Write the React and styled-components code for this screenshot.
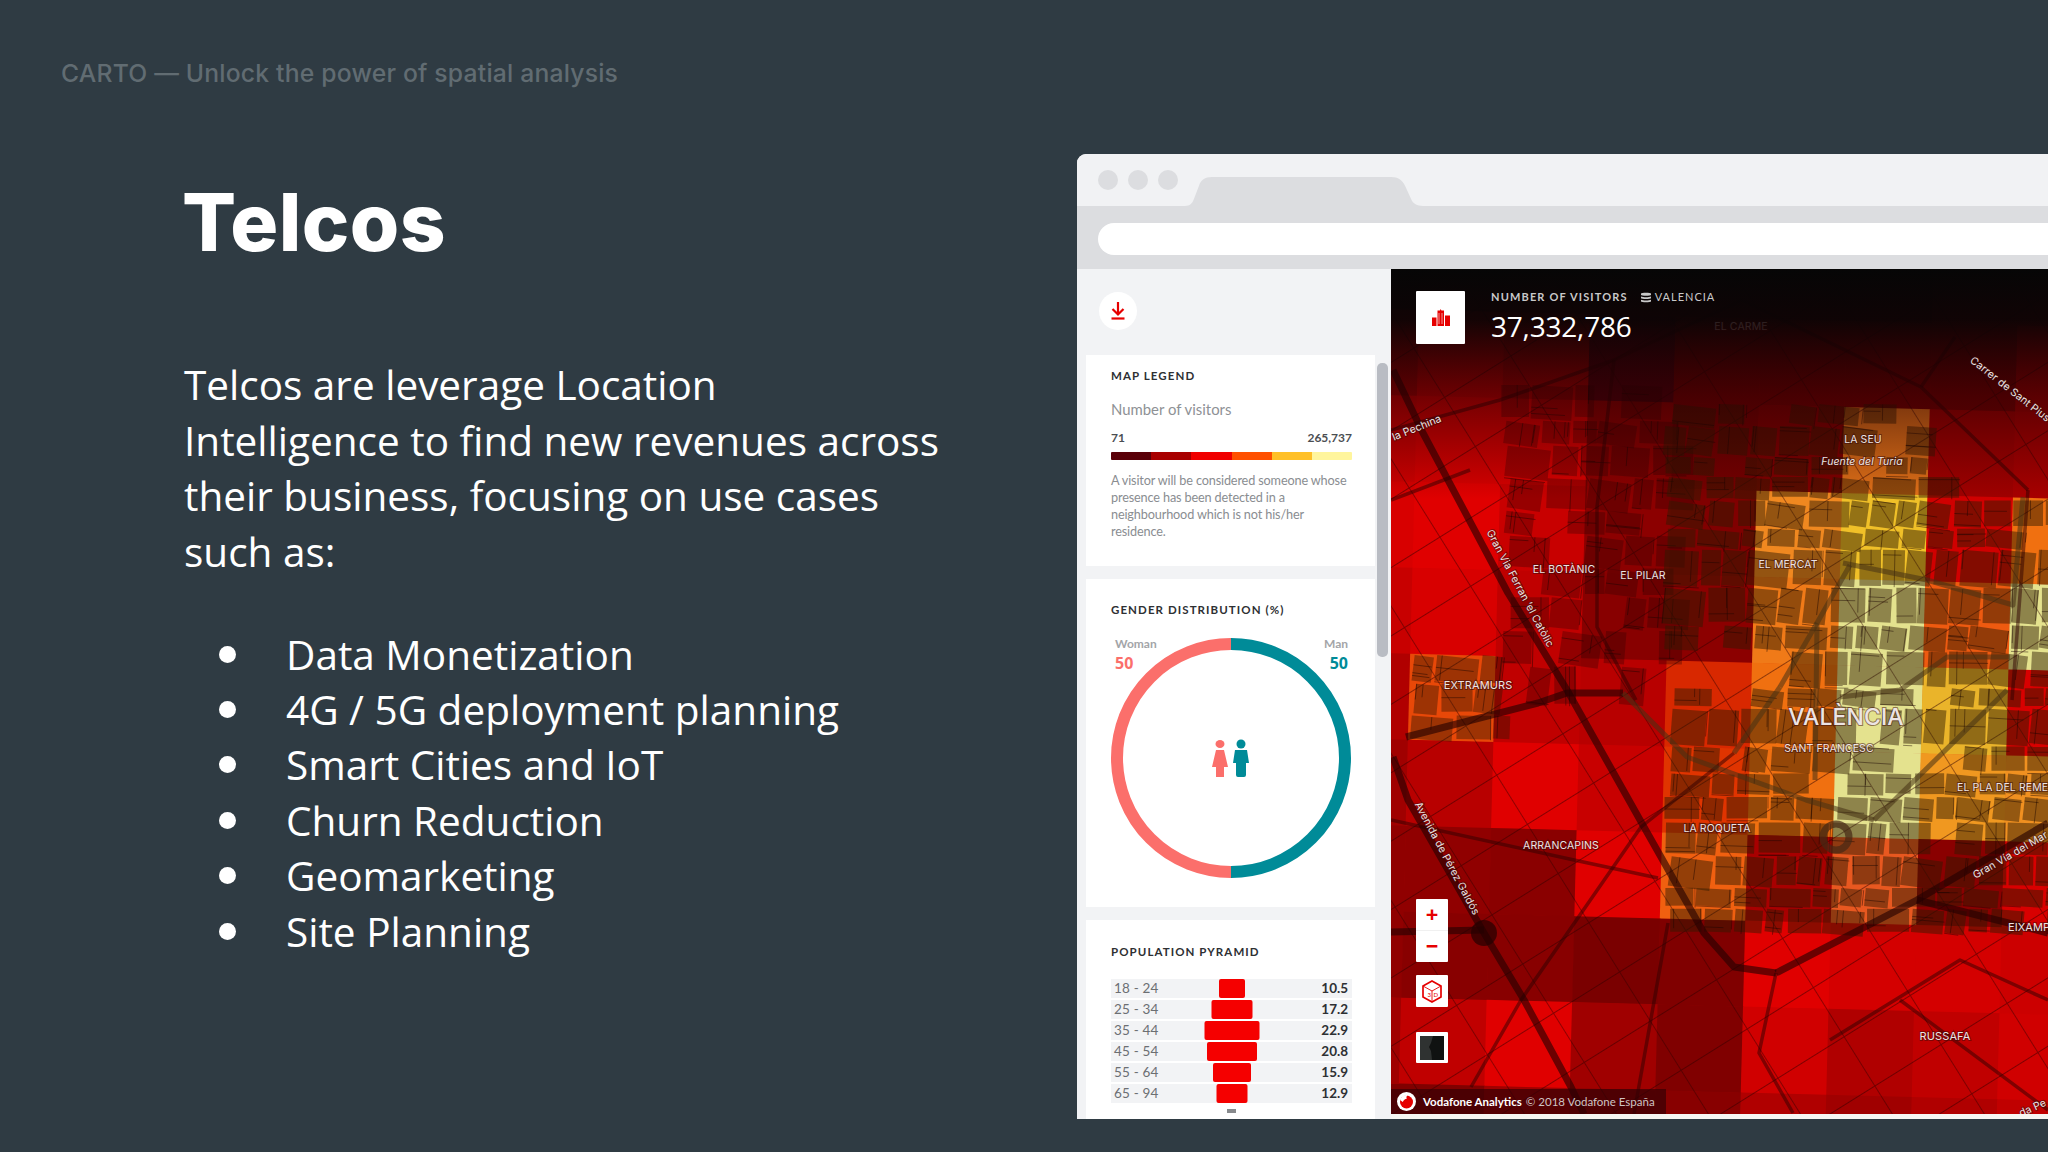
import React from 'react';
import styled, { createGlobalStyle } from 'styled-components';

const Global = createGlobalStyle`
  html, body { margin: 0; padding: 0; background: #2f3b43; }
  * { box-sizing: border-box; }
`;

const Slide = styled.div`
  width: 2048px; height: 1152px; overflow: hidden; display: flex;
  background: #2f3b43; color: #fff;
`;
const Copy = styled.div`
  flex: 0 0 1077px; padding: 58px 0 0 62px;
`;
const Kicker = styled.div`
  font: 500 24.7px/30px Inter, "Liberation Sans", sans-serif; color: #616c72; letter-spacing: 0.2px; margin-left: -1px;
`;
const Indented = styled.div`
  margin-left: 122px;
`;
const Title = styled.h1`
  margin: 89px 0 0 -2px; font: 800 80px/90px Inter, "Liberation Sans", sans-serif; color: #fff; letter-spacing: 0.4px;
`;
const Para = styled.p`
  margin: 90px 0 0; width: 755px; font: 400 40.5px/55.6px "Open Sans", sans-serif; color: #fff;
`;
const Bullets = styled.ul`
  margin: 47px 0 0; padding: 0; list-style: none;
`;
const Bullet = styled.li`
  display: flex; align-items: center; height: 55.4px; font: 400 40.5px/55px "Open Sans", sans-serif; color: #fff;
  &::before { content: ""; flex: 0 0 17px; height: 17px; border-radius: 50%; background: #fff; margin: 0 50px 0 35px; }
`;

const Browser = styled.div`
  flex: 1; margin-top: 154px; height: 965px; display: flex; flex-direction: column;
  border-radius: 9px 0 0 0; overflow: hidden; background: #f2f3f5;
`;
const TitleBar = styled.div`
  flex: 0 0 52px; background: #f1f2f4; display: flex; padding-left: 21px;
`;
const Dots = styled.div`
  display: flex; gap: 10px; padding-top: 16px; height: 37px;
`;
const Dot = styled.span`
  width: 20px; height: 20px; border-radius: 50%; background: #dcdde0;
`;
const TabShape = styled.svg`
  display: block; flex: none; width: 238px; height: 29px; margin: 23px 0 0 7px;
`;
const AddressRow = styled.div`
  flex: 0 0 63px; background: #dcdde0; padding: 17px 0 14px 21px;
`;
const AddressBar = styled.div`
  height: 32px; background: #fff; border-radius: 16px 0 0 16px;
`;
const Workspace = styled.div`
  flex: 1; display: flex; min-height: 0;
`;
const Sidebar = styled.aside`
  flex: 0 0 314px; padding: 0 16px 0 9px; background: #f2f3f5; position: relative; overflow: hidden;
`;
const Tools = styled.div`
  height: 86px; padding: 23px 0 0 13px;
`;
const RoundButton = styled.div`
  width: 38px; height: 38px; border-radius: 50%; background: #fff; display: flex; align-items: center; justify-content: center;
`;
const Card = styled.section`
  background: #fff; padding: ${p => p.$top}px 23px 0 25px; height: ${p => p.$h}px; margin-bottom: 13px;
`;
const CardTitle = styled.h3`
  margin: 0; font: 700 11.5px/14px Lato, sans-serif; letter-spacing: 1.08px; color: #2e3033; text-transform: uppercase;
`;
const Subtitle = styled.div`
  margin-top: 16px; font: 400 14.9px/20px Lato, sans-serif; color: #8e9195;
`;
const Range = styled.div`
  margin-top: 12px; display: flex; justify-content: space-between; font: 700 12px/14px Lato, sans-serif; color: #4b4e52;
`;
const ScaleBar = styled.div`
  margin-top: 7px; height: 8px; display: flex; border-radius: 1px; overflow: hidden;
`;
const ScaleStep = styled.span`
  flex: 1; background: ${p => p.$c};
`;
const Note = styled.p`
  margin: 12px 0 0; font: 400 12.7px/17px Lato, sans-serif; color: #8a8d91; letter-spacing: -0.15px;
`;
const Chart = styled.div`
  margin-top: 21px; width: 241px; height: 240px; position: relative;
`;
const ChartLabel = styled.div`
  position: absolute; top: -2px; ${p => p.$side}: 4px; text-align: ${p => p.$side};
  font: 700 12px/16px Lato, sans-serif; color: #a3a5a8;
  b { display: block; margin-top: 2px; font: 700 16px/18px "Open Sans", sans-serif; color: ${p => p.$c}; }
`;
const RingSvg = styled.svg`
  display: block; width: 240px; height: 240px;
`;
const Rows = styled.div`
  margin-top: 20px; display: flex; flex-direction: column; gap: 2.1px;
`;
const Row = styled.div`
  height: 19px; background: #f2f3f5; display: flex; justify-content: space-between; align-items: center; padding: 0 4px 0 3px; position: relative;
  font: 400 13.5px/19px Lato, sans-serif; color: #6c6f73; letter-spacing: 0.2px;
  b { font: 700 13.5px/19px Lato, sans-serif; color: #2e3033; letter-spacing: 0; }
`;
const PyramidBar = styled.span`
  position: absolute; top: 0; bottom: 0; left: 50%; width: ${p => p.$w}px; transform: translateX(-50%);
  background: #f50000; border-radius: 2px;
`;
const CutOffMark = styled.div`
  width: 9px; height: 4px; margin: 6px auto 0; background: #55585c; opacity: .7;
`;
const Scrollbar = styled.div`
  position: absolute; left: 300px; top: 94px; width: 11px; height: 294px; border-radius: 5px; background: #b9bcc3;
`;

const MapPane = styled.div`
  flex: 1; position: relative; background: #f6f6f2; overflow: hidden;
`;
const MapSvg = styled.svg`
  display: block; width: 657px; height: 845px;
`;
const Label = styled.text`
  font-family: Inter, "Liberation Sans", sans-serif; letter-spacing: 0.1px;
  fill: #ece4e4; stroke: rgba(60,10,10,.5); stroke-width: 2px; paint-order: stroke;
  text-anchor: ${p => p.$anchor || 'middle'};
`;
const StatTile = styled.div`
  position: absolute; left: 25px; top: 22px; width: 49px; height: 53px; background: #fff; border-radius: 1px;
  display: flex; align-items: center; justify-content: center;
`;
const Stat = styled.div`
  position: absolute; left: 100px; top: 20px; color: #fff;
`;
const StatHead = styled.div`
  display: flex; align-items: center; font: 700 11px/16px Lato, sans-serif; letter-spacing: 1.15px; color: #c9c9c9;
  span { display: flex; align-items: center; gap: 4px; margin-left: 13px; font-weight: 400; letter-spacing: 1px; }
`;
const StatValue = styled.div`
  margin-top: 3px; font: 400 28px/36px "Open Sans", sans-serif; color: #fff; letter-spacing: -0.2px;
`;
const MapTool = styled.div`
  position: absolute; left: 25px; top: ${p => p.$top}px; width: 32px; height: ${p => p.$h}px; background: #fff; border-radius: 1px;
  display: flex; flex-direction: column; align-items: center; justify-content: center;
`;
const ZoomKey = styled.div`
  flex: 1; display: flex; align-items: center; justify-content: center; align-self: stretch; padding-bottom: 3px;
  font: 700 22px/1 "Open Sans", sans-serif; color: #e60000;
  & + & { border-top: 1px solid #f0f0f0; }
`;
const BaseSwatch = styled.svg`
  display: block; width: 24px; height: 24px;
`;
const Credit = styled.div`
  position: absolute; left: 0; top: 820px; width: 275px; height: 25px; padding-left: 6px;
  background: rgba(50,0,5,.68); display: flex; align-items: center; gap: 7px;
  font: 700 11.5px/1 Lato, sans-serif; color: #fff; white-space: nowrap;
  span { font-weight: 400; color: #cfc4c4; margin-left: -3px; }
`;

const L = '#e4e28e';
const D = '#760000';
const grid = [
  ['#400000','#700000','#800000','#600000','#600000','#600000','#600000','#800000','#800000'],
  ['#a80000','#c80000','#b00000','#50000a',D,D,D,'#780000','#a00000'],
  ['#d00000','#d80000','#d80000','#8c0000',D,'#800000','#e07018','#a00000','#a80000'],
  ['#d80000','#e00000','#c80000','#8c0000','#800000','#f08820','#f0c028','#d00000','#f07010'],
  ['#c80000','#d80000','#c00000','#880000','#8c0000','#f07a18',L,'#ee5a10',L],
  ['#b00000','#e84808','#c00000','#b80000','#d82800','#f07010',L,'#eab42a','#d80000'],
  ['#a00000','#b80000','#e00000','#c80000','#e03400','#f07010',L,'#f09820','#f09020'],
  ['#900000','#900000','#8a0000','#e00000','#f06010','#a80000','#e85820','#8a0000','#d80000'],
  ['#900000','#880000','#880000','#7a0000','#800000','#e00000','#d40000','#d40000','#cc0000'],
  ['#a00000','#c00000','#e00000','#a00000','#800000','#d00000','#b00000','#c00000','#d00000'],
  ['#800000','#800000','#a00000','#8a0000','#880000','#b00000','#a00000','#b00000','#c00000'],
];

let seed = 12345;
const rnd = () => { seed = (seed * 16807) % 2147483647; return seed / 2147483647; };
// Irregular city blocks: jittered streets, parcels drawn as thin lines inside each block.
const makeBlocks = (x0, x1, y0, y1, skip, keep = 0.88) => {
  const out = [];
  let y = y0;
  while (y < y1) {
    const h = 20 + rnd() * 20;
    let x = x0 + rnd() * 12;
    while (x < x1) {
      const w = 20 + rnd() * 26;
      if (!skip(x, y) && rnd() < keep) {
        const gap = 2 + rnd() * 2;
        const cuts = [];
        const n = 1 + Math.floor(rnd() * 3);
        for (let i = 0; i < n; i++) {
          const a = rnd();
          cuts.push(rnd() < 0.5
            ? `M${(x + a * w).toFixed(1)} ${y.toFixed(1)}V${(y + (0.4 + rnd() * 0.6) * h).toFixed(1)}`
            : `M${x.toFixed(1)} ${(y + a * h).toFixed(1)}H${(x + (0.4 + rnd() * 0.6) * w).toFixed(1)}`);
        }
        out.push({ x, y, w: w - gap, h: h - gap, rot: 4 + (rnd() - 0.5) * 9, cuts: cuts.join('') });
      }
      x += w;
    }
    y += h;
  }
  return out;
};
const dense = makeBlocks(1664, 2060, 404, 925, (x, y) => (x > 1930 && y < 490));
const outer = makeBlocks(1500, 1664, 385, 695, () => false, 0.8);
const westEnd = makeBlocks(1408, 1495, 655, 740, () => false);

const mainRoads = [
  'M1393 370L1423 433L1508 593L1567 690L1644 827L1704 933L1734 967L1776 973',
  'M1393 757L1408 800L1484 933L1524 1000L1571 1087L1584 1114',
  'M1776 973L1917 900L2048 823',
  'M1917 900L2048 933',
  'M1406 737L1538 703L1567 693L1623 693',
  'M1391 932L1484 930',
];
const centerRoads = [
  'M1623 693L1687 757L1806 800L1874 820',
  'M1874 820L2007 690',
  'M1843 563L1927 580L2013 605L2023 497',
  'M1850 565L1817 623L1815 780',
  'M1840 697L1900 690L1947 657L2010 657',
  'M1780 687L1817 623',
  'M1734 753L1780 687',
];
const minorRoads = [
  'M1391 820L1574 860L1658 878', 'M1471 1087L1521 1000L1641 827L1734 753',
  'M1634 1114L1668 923', 'M1776 973L1759 1053L1793 1113', 'M1391 430L1500 400L1614 360L1742 300L1921 387L2028 490',
  'M1921 387L1955 337', 'M1614 360L1597 507L1597 627L1636 700', 'M2028 490L2012 700',
  'M1900 1000L2048 1110', 'M1830 1040L1960 960L2048 1000', 'M1391 500L1470 470',
];
const labels = [
  ['VALÈNCIA', 1846, 725, 23, 500],
  ['SANT FRANCESC', 1829, 752, 10.5],
  ['EL PLA DEL REMEI', 1957, 791, 10.5, 400, 'start'],
  ['LA ROQUETA', 1717, 832, 10.5],
  ['ARRANCAPINS', 1561, 849, 10.5],
  ['EIXAMPLE', 2008, 931, 11, 400, 'start'],
  ['RUSSAFA', 1945, 1040, 11],
  ['EXTRAMURS', 1478, 689, 11],
  ['EL BOTÀNIC', 1564, 573, 10.5],
  ['EL PILAR', 1643, 579, 10.5],
  ['EL MERCAT', 1788, 568, 10.5],
  ['LA SEU', 1863, 443, 10.5],
];
const tilted = [
  ['la Pechina', 1418, 431, -22],
  ['Carrer de Sant Pius', 2008, 392, 38],
  ['Gran Via Ferran \u2019el Catòlic', 1517, 590, 62],
  ['Avenida de Pérez Galdós', 1444, 860, 62],
  ['Gran Vía del Mar', 2012, 858, -30],
  ['da Pe', 2034, 1111, -24],
];

const pyramid = [
  ['18 - 24', 26, '10.5'], ['25 - 34', 41, '17.2'], ['35 - 44', 55, '22.9'],
  ['45 - 54', 50, '20.8'], ['55 - 64', 38, '15.9'], ['65 - 94', 31, '12.9'],
];
const scale = ['#5a0008', '#a80000', '#f00000', '#ff5000', '#ffc028', '#fff59d'];
const items = ['Data Monetization', '4G / 5G deployment planning', 'Smart Cities and IoT', 'Churn Reduction', 'Geomarketing', 'Site Planning'];

function Blocks({ list, fill }) {
  return (
    <g fill={fill}>
      {list.map((b, i) => (
        <g key={i} transform={`rotate(${b.rot} ${b.x} ${b.y})`}>
          <rect x={b.x} y={b.y} width={b.w} height={b.h} />
          <path d={b.cuts} fill="none" stroke="rgba(25,5,0,.55)" strokeWidth="0.8" />
        </g>
      ))}
    </g>
  );
}

function CityMap() {
  return (
    <MapSvg viewBox="1391 269 657 845">
      <defs>
        <linearGradient id="topfade" x1="0" y1="0" x2="0" y2="1">
          <stop offset="0" stopColor="#060606" stopOpacity="1" />
          <stop offset="0.22" stopColor="#0a0405" stopOpacity="0.95" />
          <stop offset="0.55" stopColor="#200003" stopOpacity="0.55" />
          <stop offset="1" stopColor="#200003" stopOpacity="0" />
        </linearGradient>
        <pattern id="streets" width="78" height="58" patternUnits="userSpaceOnUse" patternTransform="rotate(-32)">
          <path d="M0 0H78M0 0V58" fill="none" stroke="rgba(45,0,0,.5)" strokeWidth="1.8" />
        </pattern>
      </defs>
      <rect x="1391" y="269" width="657" height="845" fill="#c00000" />
      <g transform="rotate(1.5 1842 493)">
        {grid.map((row, v) => row.map((c, u) => (
          <rect key={`${u}-${v}`} x={1842 + (u - 6) * 85.5} y={493 + (v - 3) * 86} width="86" height="86.5" fill={c} />
        )))}
      </g>
      <rect x="1391" y="269" width="657" height="845" fill="url(#streets)" />
      <Blocks list={outer} fill="rgba(40,0,0,.3)" />
      <Blocks list={westEnd} fill="rgba(45,20,0,.4)" />
      <Blocks list={dense} fill="rgba(45,25,0,.47)" />
      <g fill="none" strokeLinejoin="round">
        {minorRoads.map((d, i) => <path key={i} d={d} stroke="rgba(45,0,0,.5)" strokeWidth="3.5" />)}
        {mainRoads.map((d, i) => <path key={i} d={d} stroke="rgba(35,0,0,.62)" strokeWidth="7" />)}
        {centerRoads.map((d, i) => <path key={i} d={d} stroke="rgba(70,50,20,.55)" strokeWidth="5" />)}
        <ellipse cx="1836" cy="837" rx="13" ry="13" stroke="rgba(70,40,20,.7)" strokeWidth="7" />
      </g>
      <circle cx="1484" cy="933" r="13" fill="rgba(35,0,0,.7)" />
      <rect x="1391" y="269" width="657" height="230" fill="url(#topfade)" />
      <Label x="1741" y="330" fontSize="10.5" opacity="0.12">EL CARME</Label>
      {labels.map(([t, x, y, s, w, a]) => (
        <Label key={t} x={x} y={y} fontSize={s} fontWeight={w || 400} $anchor={a}>{t}</Label>
      ))}
      <Label x="1862" y="465" fontSize="10.5" fontStyle="italic">Fuente del Turia</Label>
      {tilted.map(([t, x, y, r]) => (
        <Label key={t} x={x} y={y} fontSize="10.5" transform={`rotate(${r} ${x} ${y})`}>{t}</Label>
      ))}
    </MapSvg>
  );
}

export default function App() {
  return (
    <Slide>
      <Global />
      <Copy>
        <Kicker>CARTO — Unlock the power of spatial analysis</Kicker>
        <Indented>
          <Title>Telcos</Title>
          <Para>Telcos are leverage Location Intelligence to find new revenues across their business, focusing on use cases such as:</Para>
          <Bullets>{items.map(t => <Bullet key={t}>{t}</Bullet>)}</Bullets>
        </Indented>
      </Copy>
      <Browser>
        <TitleBar>
          <Dots><Dot /><Dot /><Dot /></Dots>
          <TabShape viewBox="0 0 240 29">
            <path d="M0 29C5 29 7 27 9 22L14 9C16 3 20 0 27 0H208C215 0 219 3 222 9L228 22C230 27 234 29 240 29Z" fill="#dcdde0" />
          </TabShape>
        </TitleBar>
        <AddressRow><AddressBar /></AddressRow>
        <Workspace>
          <Sidebar>
            <Tools>
              <RoundButton>
                <svg width="16" height="18" viewBox="0 0 16 18" fill="none" stroke="#e60000" strokeWidth="2.2">
                  <path d="M8 0V12M2.500 7L8 12.500L13.500 7" />
                  <path d="M1.500 16.500H14.500" />
                </svg>
              </RoundButton>
            </Tools>
            <Card $top={14} $h={211}>
              <CardTitle>Map legend</CardTitle>
              <Subtitle>Number of visitors</Subtitle>
              <Range><span>71</span><span>265,737</span></Range>
              <ScaleBar>{scale.map(c => <ScaleStep key={c} $c={c} />)}</ScaleBar>
              <Note>A visitor will be considered someone whose presence has been detected in a neighbourhood which is not his/her residence.</Note>
            </Card>
            <Card $top={24} $h={328}>
              <CardTitle>Gender distribution (%)</CardTitle>
              <Chart>
                <RingSvg viewBox="0 0 240 240" fill="none" strokeWidth="12">
                  <path d="M120 6A114 114 0 0 0 120 234" stroke="#fb6f6b" />
                  <path d="M120 6A114 114 0 0 1 120 234" stroke="#008b98" />
                  <g fill="#fb6f6b" stroke="none">
                    <ellipse cx="109" cy="106" rx="4.500" ry="4" />
                    <path d="M105 112H113L117 129H113V139H105V129H101Z" />
                  </g>
                  <g fill="#008b98" stroke="none">
                    <circle cx="130" cy="106" r="4.500" />
                    <path d="M124 112H136L138 125H135V137Q135 139 133 139H127Q125 139 125 137V125H122Z" />
                  </g>
                </RingSvg>
                <ChartLabel $side="left" $c="#fb6f6b">Woman<b>50</b></ChartLabel>
                <ChartLabel $side="right" $c="#008b98">Man<b>50</b></ChartLabel>
              </Chart>
            </Card>
            <Card $top={25} $h={220}>
              <CardTitle>Population pyramid</CardTitle>
              <Rows>
                {pyramid.map(([a, w, v]) => (
                  <Row key={a}><span>{a}</span><PyramidBar $w={w} /><b>{v}</b></Row>
                ))}
              </Rows>
              <CutOffMark />
            </Card>
            <Scrollbar />
          </Sidebar>
          <MapPane>
            <CityMap />
            <StatTile>
              <svg width="18" height="18" viewBox="0 0 18 18" fill="#e60000">
                <path d="M0 8.500H4.500V17H0ZM5.500 1.500H8L8.500 0L9.500 1.500H12V17H5.500ZM13 6.500H18V17H13Z" />
                <path d="M7 4V15M10 4V15" stroke="#fff" strokeWidth="0.6" />
              </svg>
            </StatTile>
            <Stat>
              <StatHead>
                NUMBER OF VISITORS
                <span>
                  <svg width="10" height="11" viewBox="0 0 10 11" fill="#c9c9c9">
                    <path d="M0 1.500C0 .5 10 .5 10 1.500V3C10 4 0 4 0 3ZM0 4.500C2 5.500 8 5.500 10 4.500V6.200C10 7.200 0 7.200 0 6.200ZM0 7.800C2 8.800 8 8.800 10 7.800V9.500C10 10.500 0 10.500 0 9.500Z" />
                  </svg>
                  VALENCIA
                </span>
              </StatHead>
              <StatValue>37,332,786</StatValue>
            </Stat>
            <MapTool $top={630} $h={63}>
              <ZoomKey>+</ZoomKey>
              <ZoomKey>−</ZoomKey>
            </MapTool>
            <MapTool $top={706} $h={32}>
              <svg width="20" height="23" viewBox="0 0 20 23" fill="none" stroke="#e60000" strokeWidth="1.700">
                <path d="M10 1L19 6V17L10 22L1 17V6Z" />
                <path d="M1 6L10 11L19 6M10 11V22" strokeWidth="0.9" />
                <text x="5.500" y="17" fontSize="6" fontFamily="Lato, sans-serif" fill="#e60000" stroke="none">3</text>
                <text x="11.500" y="17" fontSize="6" fontFamily="Lato, sans-serif" fill="#e60000" stroke="none">D</text>
              </svg>
            </MapTool>
            <MapTool $top={763} $h={31}>
              <BaseSwatch viewBox="0 0 24 24">
                <rect width="24" height="24" fill="#101211" />
                <path d="M0 0H13L11 7L9 11L11 15L12 24H0Z" fill="#2f3231" />
              </BaseSwatch>
            </MapTool>
            <Credit>
              <svg width="19" height="19" viewBox="0 0 19 19">
                <circle cx="9.500" cy="9.500" r="9.500" fill="#fff" />
                <circle cx="9.500" cy="10" r="6.500" fill="#e60000" />
                <path d="M3 8C4 5 7 3 11 2.500C9.500 4 9 5.500 9.800 6.800C8 7 6.500 8 5.800 10Z" fill="#fff" />
              </svg>
              Vodafone Analytics <span>© 2018 Vodafone España</span>
            </Credit>
          </MapPane>
        </Workspace>
      </Browser>
    </Slide>
  );
}
